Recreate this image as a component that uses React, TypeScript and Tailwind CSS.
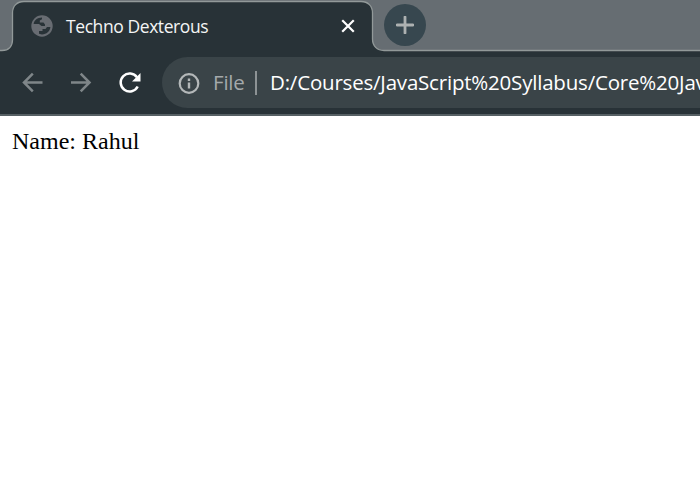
import React from "react";

const ui = "font-['Open_Sans','Noto_Sans',sans-serif]";

function TabStrip() {
  return (
    <div className="relative flex h-[51px] bg-[#666d72]">
      <svg className="absolute inset-0" width="700" height="52" viewBox="0 0 700 52" fill="none">
        <path
          d="M-1 50.5H2C9 50.5 12.500 46 12.500 40V13C12.500 6 17 1.500 24 1.500H361C368 1.500 372.500 6 372.500 13V39C372.500 46 377 50.500 384 50.500H701V54H-1Z"
          fill="#283237"
          stroke="#929999"
          strokeWidth="1.300"
        />
      </svg>
      <div className="relative flex h-[51px] w-[372px] items-center pl-[31px]">
        <svg width="22" height="22" viewBox="0 0 22 22">
          <circle cx="11" cy="11" r="10.700" fill="#686c72" />
          <path
            d="M2.600 9C3.300 5.300 6.500 2.700 11 2.600V4.300L8.800 5.500V7.500H12.500L14 9.500V11H10.500L8 9Z"
            fill="#283237"
          />
          <path
            d="M19.400 12C19 16.200 15.500 19.400 11 19.400L8 18.800V16H11.500V14H14.500L16 12Z"
            fill="#283237"
          />
        </svg>
        <span className={`${ui} ml-[13px] w-[250px] text-[17.5px] leading-6 tracking-[-0.42px] text-[#f4f5f5]`}>
          Techno Dexterous
        </span>
        <svg className="ml-[24px] shrink-0" width="16" height="16" viewBox="0 0 16 16">
          <path d="M3 3L13 13M13 3L3 13" stroke="#fff" strokeWidth="2.200" strokeLinecap="square" />
        </svg>
      </div>
      <div className="relative ml-[12px] mt-[4px] flex size-[42px] items-center justify-center rounded-full bg-[#37474f]">
        <svg width="18" height="18" viewBox="0 0 18 18">
          <path d="M9 1V17M1 9H17" stroke="#adb1b1" strokeWidth="2.800" strokeLinecap="round" />
        </svg>
      </div>
    </div>
  );
}

function Toolbar() {
  return (
    <div className="flex h-[63px] items-center bg-[#283237] pl-[22px]">
      <svg className="shrink-0" width="22" height="22" viewBox="0 0 22 22" fill="none" stroke="#7f8689" strokeWidth="2.500">
        <path d="M20.500 10.500H2.500M10.800 1.700L2 10.500L10.800 19.300" />
      </svg>
      <svg className="ml-[27px] shrink-0" width="22" height="22" viewBox="0 0 22 22" fill="none" stroke="#7f8689" strokeWidth="2.500">
        <path d="M0 10.500H18M9.700 1.700L18.500 10.500L9.700 19.300" />
      </svg>
      <svg className="ml-[25px] shrink-0" width="24" height="24" viewBox="0 0 24 24" fill="none">
        <path d="M19 6.200A9 9 0 1 0 19.700 15.500" stroke="#fff" strokeWidth="2.500" />
        <path d="M22.500 2V10.500H14Z" fill="#fff" />
      </svg>
      <div className={`${ui} ml-[20px] flex h-[51px] w-[538px] shrink-0 items-center rounded-l-full bg-[#3a4448] pl-[16px] text-[20.5px] whitespace-nowrap`}>
        <svg className="shrink-0" width="22" height="22" viewBox="0 0 22 22">
          <circle cx="11" cy="11.500" r="9.300" fill="none" stroke="#b4b8b9" strokeWidth="2.200" />
          <path d="M11 10.500V16.500M11 6.500V9" stroke="#b4b8b9" strokeWidth="2.400" />
        </svg>
        <span className="ml-[13px] w-[42px] shrink-0 tracking-[-0.2px] text-[#a4a9ab]">File</span>
        <span className="h-6 w-[2px] shrink-0 bg-[#8d9395]" />
        <span className="ml-[13px] shrink-0 tracking-[-0.2px] text-white">
          D:/Courses/JavaScript%20Syllabus/Core%20Jav
        </span>
      </div>
    </div>
  );
}

export default function App() {
  return (
    <div className="flex h-[486px] w-[700px] flex-col overflow-hidden bg-white">
      <TabStrip />
      <Toolbar />
      <div className="h-[2px] bg-[#566064]" />
      <main className="px-3 pt-[11px] font-['Liberation_Serif',serif] text-[24px] leading-7 text-black">
        Name: Rahul
      </main>
    </div>
  );
}
